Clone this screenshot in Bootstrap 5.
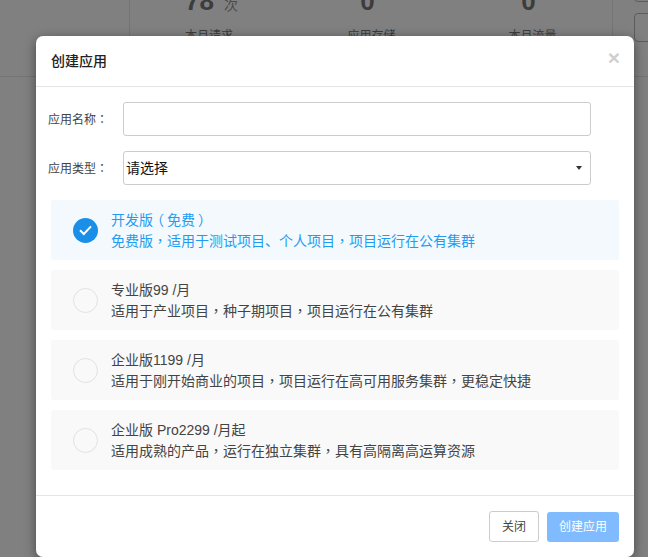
<!DOCTYPE html>
<html lang="zh-CN">
<head>
<meta charset="utf-8">
<title>创建应用</title>
<link rel="stylesheet" href="https://cdn.jsdelivr.net/npm/bootstrap@5.3.0/dist/css/bootstrap.min.css">
<style>
html,body{height:557px;overflow:hidden;}
body{background:#808080;color:#333;font-family:"Liberation Sans","Noto Sans CJK SC",sans-serif;position:relative;}
.pn{font-family:"Noto Sans CJK TC",sans-serif;}
.pl{display:inline-block;transform:translateX(-3px);}
.pr{display:inline-block;transform:translateX(3px);}
.bg-page{height:77px;border-bottom:1px solid #747474;padding-left:129px;}
.bg-panel{width:484px;height:76px;border-left:1px solid #747474;border-right:1px solid #747474;}
.bg-stat{width:161px;color:#3c3c3c;height:76px;overflow:hidden;flex:none;}
.bg-stat-first{padding-left:55px;}
.stat-num{font-size:26px;font-weight:700;line-height:24px;margin-top:-11px;height:25px;}
.stat-num-off{padding-right:8px;}
.stat-unit{font-size:14px;font-weight:400;margin-left:10px;color:#4a4a4a;}
.stat-label{font-size:12px;margin-top:13px;line-height:18px;}
.bg-tab{position:absolute;left:634px;top:13px;width:30px;height:29px;border:1px solid #5c5c5c;border-radius:4px;}
.bg-tab-top{top:-20px;height:22px;}
.dlg{position:absolute;left:36px;top:36px;width:598px;height:521px;background:#fff;border-radius:7px;box-shadow:0 3px 12px rgba(0,0,0,.45);display:flex;flex-direction:column;}
.dlg-head{height:51px;border-bottom:1px solid #e5e5e5;padding:0 15px;}
.dlg-title{font-size:14px;font-weight:500;color:#222;line-height:50px;}
.dlg-x{font-size:21px;font-weight:700;color:#cfcfcf;line-height:1;margin-top:11px;margin-right:-1px;}
.dlg-body{height:408px;padding:15px 0 0 12px;}
.frow{height:34px;margin-bottom:15px;}
.flabel{width:75px;font-size:12px;color:#444;}
.finput{width:468px;height:34px;border:1px solid #ccc;border-radius:3px;background:#fff;}
.fselect{font-size:14px;color:#111;padding-left:2px;padding-right:8px;}
.caret-down{width:0;height:0;border-left:3.5px solid transparent;border-right:3.5px solid transparent;border-top:4px solid #333;}
.opt{height:60px;margin:0 15px 10px 3px;background:#f9f9f9;padding-left:22px;border-radius:3px;color:#444;}
.opt-on{background:#f4f9fe;color:#1f9cf0;}
.opt-dot{width:25px;height:25px;border-radius:50%;border:1px solid #e2e2e2;flex:none;margin-right:13px;}
.opt-on .opt-dot{border:0;background:#1a8fe8;}
.opt-txt{font-size:14px;line-height:20px;}
.dlg-foot{height:62px;border-top:1px solid #e5e5e5;padding:15px 15px 0 0;}
.btn-close-x{width:50px;height:31px;padding:0;font-size:12px;color:#444;background:#fff;border:1px solid #ccc;border-radius:3px;}
.btn-make{width:72px;height:30px;padding:0;font-size:12px;color:#fff;background:#80bbff;border:0;border-radius:3px;margin-top:1px;}
</style>
</head>
<body>
<div class="bg-page">
  <div class="bg-panel d-flex">
    <div class="bg-stat bg-stat-first"><div class="stat-num">78<span class="stat-unit">次</span></div><div class="stat-label">本月请求</div></div>
    <div class="bg-stat text-center"><div class="stat-num stat-num-off">0</div><div class="stat-label">应用存储</div></div>
    <div class="bg-stat text-center"><div class="stat-num stat-num-off">0</div><div class="stat-label">本月流量</div></div>
  </div>
</div>
<div class="bg-tab bg-tab-top"></div>
<div class="bg-tab"></div>
<div class="dlg">
  <div class="dlg-head d-flex justify-content-between">
    <div class="dlg-title">创建应用</div>
    <div class="dlg-x">×</div>
  </div>
  <div class="dlg-body">
    <div class="frow d-flex align-items-center">
      <div class="flabel">应用名称<span class="pn" lang="zh-TW">：</span></div>
      <div class="finput"></div>
    </div>
    <div class="frow d-flex align-items-center">
      <div class="flabel">应用类型<span class="pn" lang="zh-TW">：</span></div>
      <div class="finput fselect d-flex align-items-center justify-content-between"><span>请选择</span><span class="caret-down"></span></div>
    </div>
    <div class="opt opt-on d-flex align-items-center">
      <div class="opt-dot d-flex align-items-center justify-content-center">
        <svg width="15" height="12" viewBox="0 0 15 12"><path d="M2 6.2 5.8 10 13 2.4" fill="none" stroke="#fff" stroke-width="2"/></svg>
      </div>
      <div class="opt-txt"><div>开发版<span class="pl">（</span>免费<span class="pr">）</span></div><div>免费版<span class="pn" lang="zh-TW">，</span>适用于测试项目、个人项目<span class="pn" lang="zh-TW">，</span>项目运行在公有集群</div></div>
    </div>
    <div class="opt d-flex align-items-center">
      <div class="opt-dot"></div>
      <div class="opt-txt"><div>专业版99 /月</div><div>适用于产业项目<span class="pn" lang="zh-TW">，</span>种子期项目<span class="pn" lang="zh-TW">，</span>项目运行在公有集群</div></div>
    </div>
    <div class="opt d-flex align-items-center">
      <div class="opt-dot"></div>
      <div class="opt-txt"><div>企业版1199 /月</div><div>适用于刚开始商业的项目<span class="pn" lang="zh-TW">，</span>项目运行在高可用服务集群<span class="pn" lang="zh-TW">，</span>更稳定快捷</div></div>
    </div>
    <div class="opt d-flex align-items-center">
      <div class="opt-dot"></div>
      <div class="opt-txt"><div>企业版 Pro2299 /月起</div><div>适用成熟的产品<span class="pn" lang="zh-TW">，</span>运行在独立集群<span class="pn" lang="zh-TW">，</span>具有高隔离高运算资源</div></div>
    </div>
  </div>
  <div class="dlg-foot d-flex justify-content-end align-items-start gap-2">
    <button type="button" class="btn btn-close-x">关闭</button>
    <button type="button" class="btn btn-make">创建应用</button>
  </div>
</div>
<script src="https://cdn.jsdelivr.net/npm/bootstrap@5.3.0/dist/js/bootstrap.bundle.min.js"></script>
</body>
</html>
